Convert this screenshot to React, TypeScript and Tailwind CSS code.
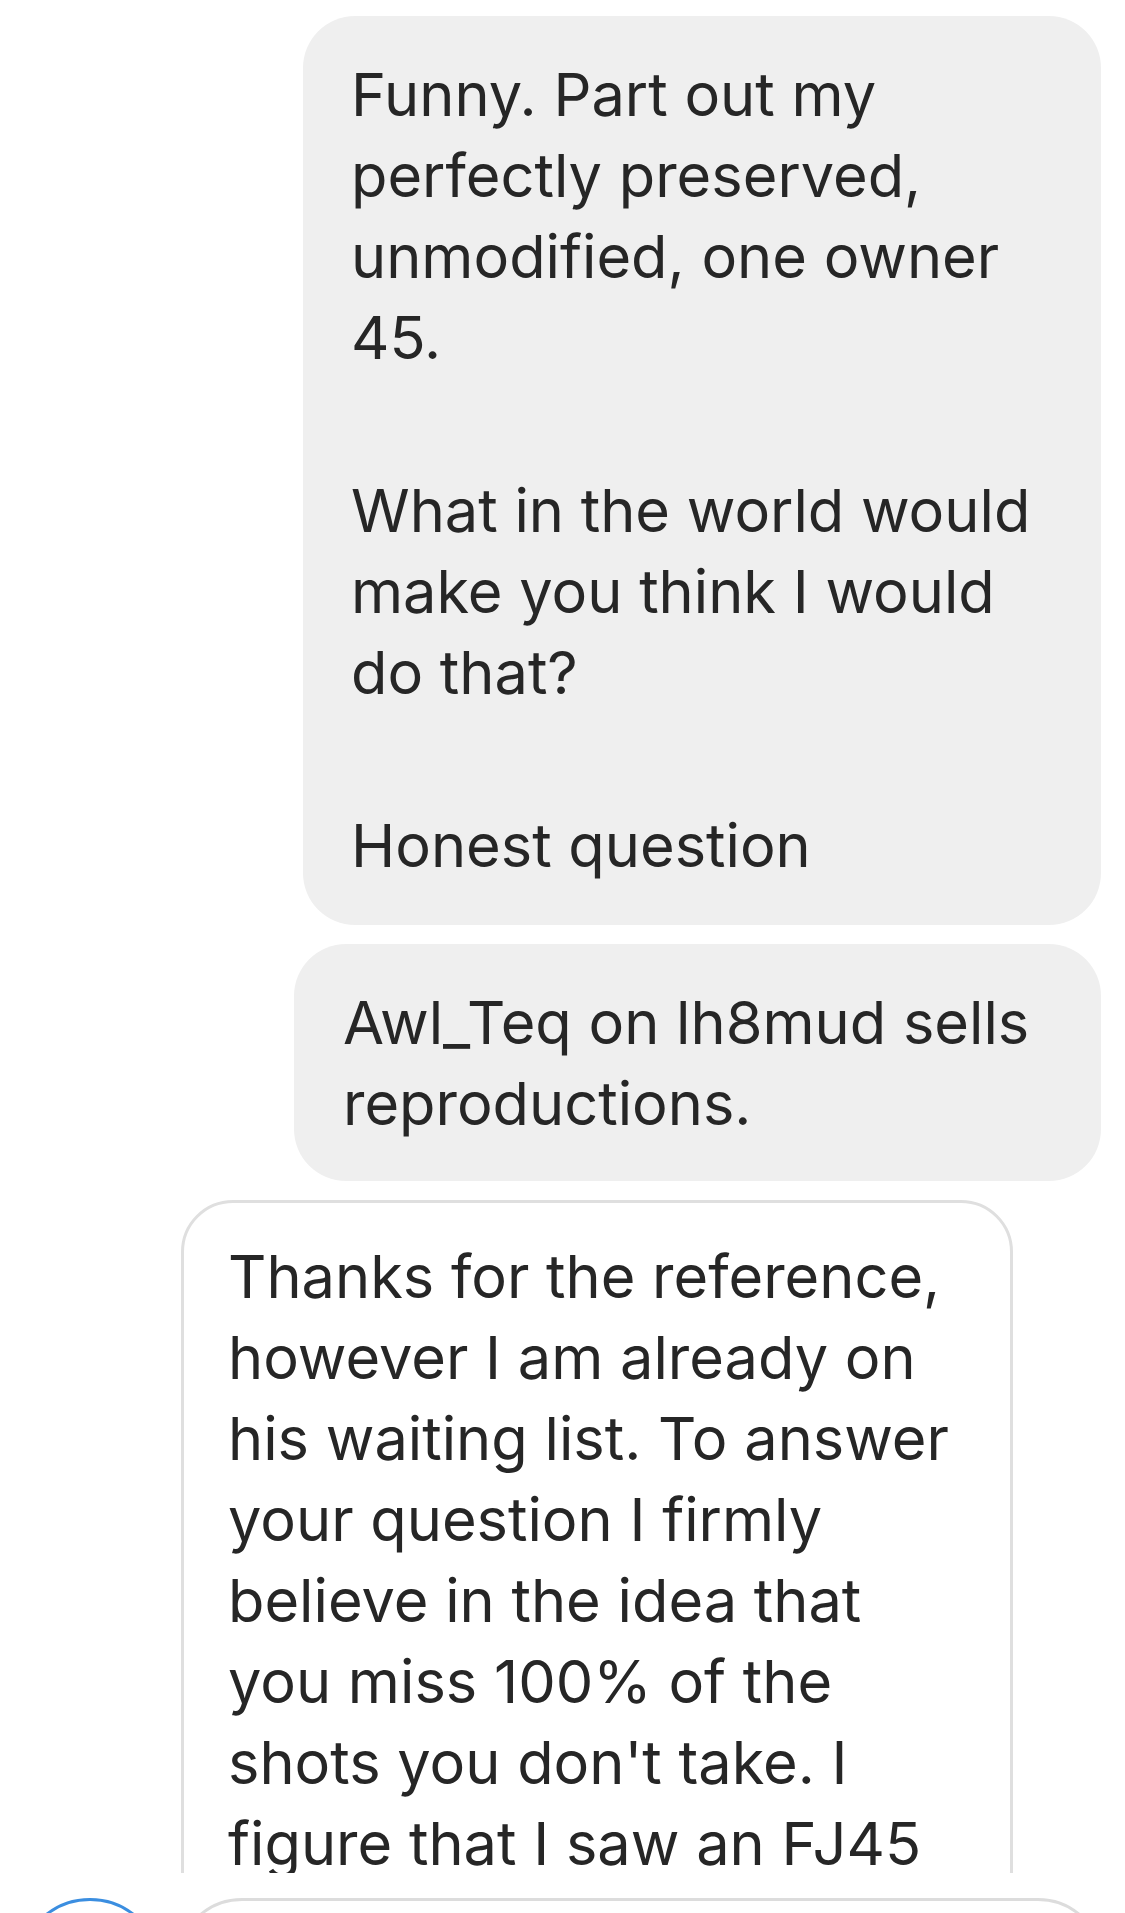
import React from "react";

type Paragraph = string[];

const sentParts: Paragraph[] = [
  ["Funny. Part out my", "perfectly preserved,", "unmodified, one owner", "45."],
  ["What in the world would", "make you think I would", "do that?"],
  ["Honest question"],
];

const sentLink: Paragraph[] = [["Awl_Teq on lh8mud sells", "reproductions."]];

const received: Paragraph[] = [
  [
    "Thanks for the reference,",
    "however I am already on",
    "his waiting list. To answer",
    "your question I firmly",
    "believe in the idea that",
    "you miss 100% of the",
    "shots you don't take. I",
    "figure that I saw an FJ45",
  ],
];

const MessageText = ({ paragraphs }: { paragraphs: Paragraph[] }) => (
  <div className="flex flex-col gap-[92px]">
    {paragraphs.map((lines, i) => (
      <p key={i}>
        {lines.map((line) => (
          <span key={line} className="block whitespace-nowrap">
            {line}
          </span>
        ))}
      </p>
    ))}
  </div>
);

const App = () => {
  return (
    <div
      className="w-[1125px] h-[1913px] bg-white overflow-hidden text-[#262626] text-[59.5px] leading-[81px]"
      style={{ fontFamily: "Inter, 'Liberation Sans', sans-serif" }}
    >
      <div className="h-[1873px] overflow-hidden pt-[16px] pr-[24px] flex flex-col gap-[19px]">
        <div className="self-end w-[798px] bg-[#efefef] rounded-[52px] pl-[48px] pt-[38px] pb-[39px]">
          <MessageText paragraphs={sentParts} />
        </div>
        <div className="self-end w-[807px] bg-[#efefef] rounded-[52px] pl-[49px] pt-[38px] pb-[37px]">
          <MessageText paragraphs={sentLink} />
        </div>
        <div className="ml-[181px] w-[832px] shrink-0 bg-white border-[3px] border-[#dfdfdf] rounded-[52px] pl-[44px] pt-[33px] pb-[36px]">
          <MessageText paragraphs={received} />
        </div>
      </div>

      <div className="flex items-start pt-[25px] pl-[18px] gap-[14px]">
        <div className="w-[144px] h-[144px] shrink-0 rounded-full border-[3px] border-[#3b8ee0]" />
        <div className="w-[928px] h-[132px] shrink-0 rounded-full border-[3px] border-[#dcdcdc]" />
      </div>
    </div>
  );
};

export default App;
